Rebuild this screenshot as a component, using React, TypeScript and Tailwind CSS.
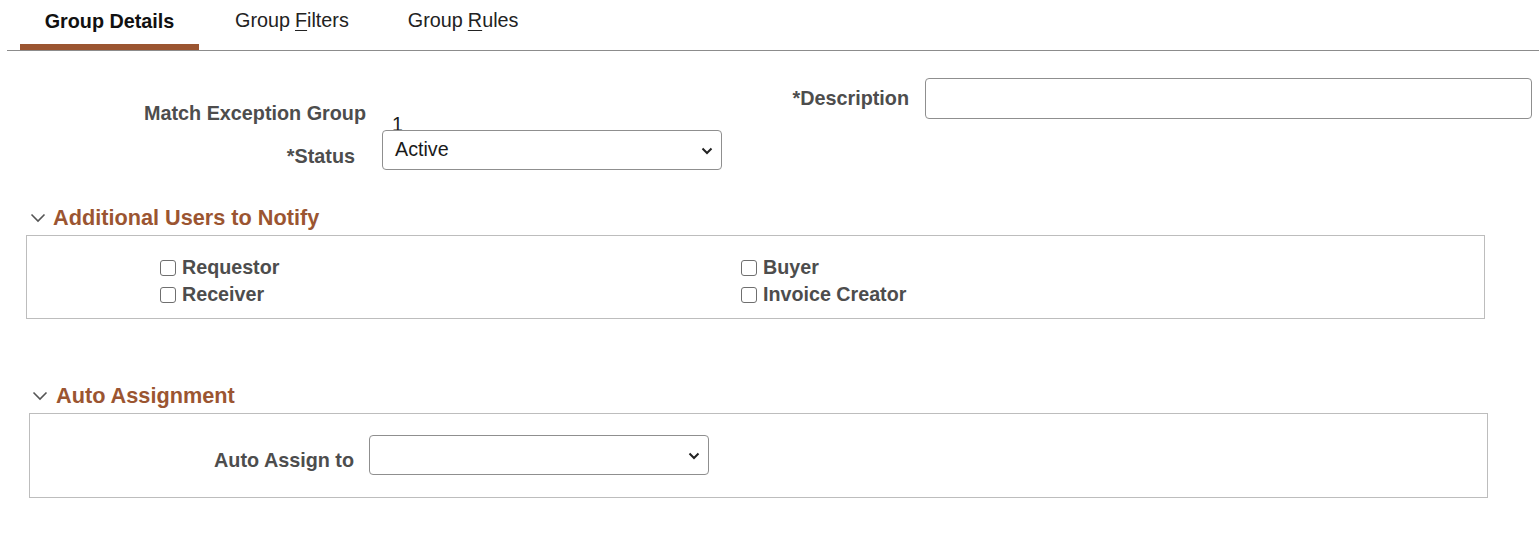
import React from "react";

const font = { fontFamily: '"Liberation Sans", Arial, sans-serif' };

function SectionChevron() {
  return (
    <svg width="16" height="10" viewBox="0 0 16 10" className="shrink-0">
      <polyline points="1.5,1.5 8,8 14.5,1.5" fill="none" stroke="#555555" strokeWidth="1.6" />
    </svg>
  );
}

function SelectBox({ value, width }: { value: string; width: string }) {
  return (
    <div className={`relative h-[40px] ${width} rounded-[4px] border border-[#8f8f8f] bg-white flex items-center pl-[12px] text-[19.7px] text-[#1a1a1a]`}>
      <span>{value}</span>
      <svg width="12" height="8" viewBox="0 0 12 8" className="absolute right-[8px] top-[16px]">
        <polyline points="1.5,1.5 6,6 10.5,1.5" fill="none" stroke="#222222" strokeWidth="2" />
      </svg>
    </div>
  );
}

function Check({ label }: { label: string }) {
  return (
    <div className="flex items-center h-[27px]">
      <span className="w-[16px] h-[16px] rounded-[3px] border border-[#6f6f6f] bg-white shrink-0" />
      <span className="ml-[6px] text-[19.7px] font-bold text-[#4d4d4d]">{label}</span>
    </div>
  );
}

export default function App() {
  return (
    <div className="w-[1539px] h-[543px] bg-white overflow-hidden" style={font}>
      {/* Tabs */}
      <div className="ml-[7px] h-[51px] border-b border-[#8c8c8c] flex items-end">
        <div className="ml-[13px] w-[179px] h-[51px] flex flex-col">
          <div className="flex-1 flex items-center justify-center text-[19.8px] font-bold text-[#111] pt-[1px]">Group Details</div>
          <div className="h-[6px] bg-[#9b5531]" />
        </div>
        <div className="h-[51px] flex items-center pb-[8px] ml-[36px] text-[19.8px] text-[#222]">
          Group <span className="underline underline-offset-[3px] ml-[5px]">F</span>ilters
        </div>
        <div className="h-[51px] flex items-center pb-[8px] ml-[59px] text-[19.8px] text-[#222]">
          Group <span className="underline underline-offset-[3px] ml-[5px]">R</span>ules
        </div>
      </div>

      {/* Header fields */}
      <div className="flex">
        <div className="w-[740px] pt-[50px]">
          <div className="flex items-start h-[29px]">
            <div className="w-[366px] text-right text-[19.8px] leading-[24px] font-bold text-[#4d4d4d]">Match Exception Group</div>
            <div className="ml-[26px] mt-[11px] text-[19.7px] leading-[24px] text-[#1a1a1a]">1</div>
          </div>
          <div className="flex items-start">
            <div className="w-[355px] mt-[14px] text-right text-[19.8px] leading-[24px] font-bold text-[#4d4d4d]">*Status</div>
            <div className="ml-[27px]">
              <SelectBox value="Active" width="w-[340px]" />
            </div>
          </div>
        </div>
        <div className="flex-1 pt-[27px]">
          <div className="flex items-center">
            <div className="w-[169px] text-right text-[19.8px] font-bold text-[#4d4d4d]">*Description</div>
            <div className="ml-[16px] w-[607px] h-[41px] rounded-[4px] border border-[#8f8f8f] bg-white" />
          </div>
        </div>
      </div>

      {/* Additional Users to Notify */}
      <div className="mt-[36px] ml-[26px] w-[1459px]">
        <div className="flex items-center h-[24px] pl-[4px]">
          <SectionChevron />
          <span className="ml-[7px] text-[21.7px] font-bold text-[#9b5531]">Additional Users to Notify</span>
        </div>
        <div className="mt-[5px] h-[84px] border border-[#bdbdbd] pt-[18px] grid grid-cols-[133px_581px_1fr]">
          <div />
          <div className="flex flex-col">
            <Check label="Requestor" />
            <Check label="Receiver" />
          </div>
          <div className="flex flex-col">
            <Check label="Buyer" />
            <Check label="Invoice Creator" />
          </div>
        </div>
      </div>

      {/* Auto Assignment */}
      <div className="mt-[65px] ml-[29px] w-[1459px]">
        <div className="flex items-center h-[24px] pl-[3px]">
          <SectionChevron />
          <span className="ml-[8px] text-[21.7px] font-bold text-[#9b5531]">Auto Assignment</span>
        </div>
        <div className="mt-[5px] h-[85px] border border-[#bdbdbd] pt-[21px] flex items-start">
          <div className="w-[324px] mt-[13px] text-right text-[19.8px] leading-[24px] font-bold text-[#4d4d4d]">Auto Assign to</div>
          <div className="ml-[15px]">
            <SelectBox value="" width="w-[340px]" />
          </div>
        </div>
      </div>
    </div>
  );
}
